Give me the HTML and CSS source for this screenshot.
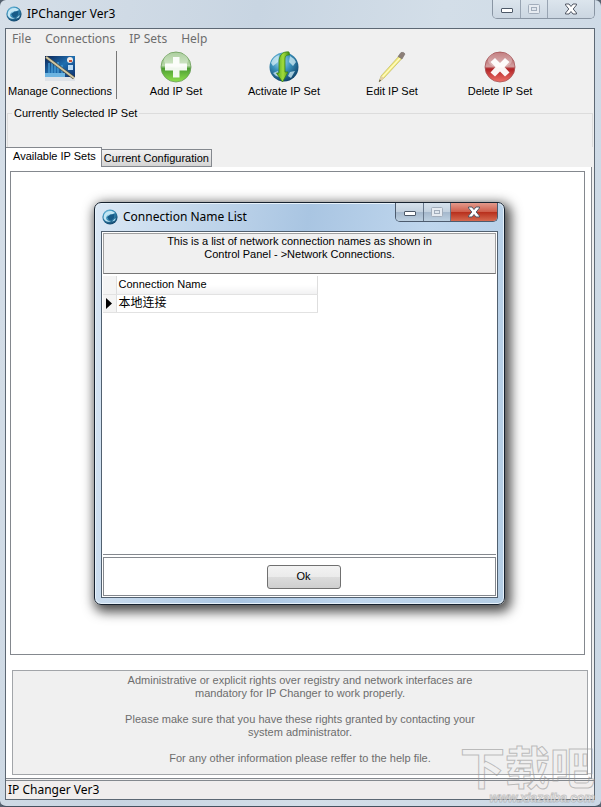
FILE: index.html
```html
<!DOCTYPE html>
<html lang="en">
<head>
<meta charset="utf-8">
<title>IPChanger Ver3</title>
<link rel="stylesheet" href="styles.css">
</head>
<body>
<svg class="defs" aria-hidden="true">
  <defs>
    <radialGradient id="globe" cx=".4" cy=".3" r=".75">
      <stop offset="0" stop-color="#a9dcf2"/><stop offset=".45" stop-color="#3b93bd"/><stop offset="1" stop-color="#0b3c63"/>
    </radialGradient>
    <linearGradient id="green" x1="0" y1="0" x2="0" y2="1">
      <stop offset="0" stop-color="#7fb46a"/><stop offset=".45" stop-color="#b9d9ab"/><stop offset=".55" stop-color="#4d9e33"/><stop offset="1" stop-color="#8fe04e"/>
    </linearGradient>
    <linearGradient id="red" x1="0" y1="0" x2="0" y2="1">
      <stop offset="0" stop-color="#a8474a"/><stop offset=".48" stop-color="#d3a0a1"/><stop offset=".56" stop-color="#b02326"/><stop offset="1" stop-color="#f07068"/>
    </linearGradient>
    <linearGradient id="arrow" x1="0" y1="0" x2="1" y2="0">
      <stop offset="0" stop-color="#4fa51c"/><stop offset=".5" stop-color="#a2dc3c"/><stop offset="1" stop-color="#3d8c14"/>
    </linearGradient>
    <linearGradient id="screen" x1="0" y1="0" x2="1" y2="1">
      <stop offset="0" stop-color="#0b2355"/><stop offset=".5" stop-color="#1f6fb0"/><stop offset="1" stop-color="#0d2f6c"/>
    </linearGradient>
    <symbol id="app" viewBox="0 0 16 16">
      <circle cx="8" cy="8" r="7.600" fill="url(#globe)"/>
      <path d="M2 6C4 1.500 10 .8 13 4L9.500 5.500C7 4.500 5 5.500 4 8.500C4 11 6 12.500 9 12C6 14 2.500 12 1.500 9Z" fill="#c3e6f4"/>
      <path d="M5 8l3.500-2.500L12.500 5l-.5 4-2.500 2.500L7 11z" fill="#175b88"/>
      <path d="M10 12.500l3.500-3.500q.5 3-3.500 3.500z" fill="#a9dcf2"/>
    </symbol>
    <symbol id="min" viewBox="0 0 14 12"><rect x="1.500" y="5.500" width="11" height="4" rx=".5" fill="#fff" stroke="#4d5968"/></symbol>
    <symbol id="max" viewBox="0 0 14 12"><rect x="1.500" y="1.500" width="11" height="9" rx="1" fill="#e6ebf1" stroke="#a2adbb"/><rect x="4.500" y="4.500" width="5" height="3" fill="#dfe6ee" stroke="#a2adbb"/></symbol>
    <symbol id="close" viewBox="0 0 14 12"><path d="M1.500 1h3.500l2 2.500L9 1h3.500v1L9.200 6l3.300 4v1H9L7 8.500 5 11H1.500v-1L4.800 6 1.500 2z" fill="#fff" stroke="#525865"/></symbol>
  </defs>
</svg>

<main class="window">
  <header class="titlebar">
    <svg class="app-icon"><use href="#app"/></svg>
    <h1 class="title">IPChanger Ver3</h1>
    <div class="controls">
      <button class="control" aria-label="Minimize"><svg class="glyph"><use href="#min"/></svg></button>
      <button class="control" aria-label="Maximize" disabled><svg class="glyph"><use href="#max"/></svg></button>
      <button class="control control-wide" aria-label="Close"><svg class="glyph"><use href="#close"/></svg></button>
    </div>
  </header>

  <div class="client">
    <nav class="menu">
      <button class="menu-item">File</button>
      <button class="menu-item">Connections</button>
      <button class="menu-item">IP Sets</button>
      <button class="menu-item">Help</button>
    </nav>

    <div class="toolbar">
      <button class="tool">
        <svg class="tool-icon" viewBox="0 0 32 32">
          <rect x="1" y="5" width="30" height="25" fill="#dfe3e8"/>
          <rect x="1" y="5" width="30" height="21" fill="url(#screen)"/>
          <path d="M5 12v12M8 10v14M11 14v10M14 11v13M18 14v10" stroke="#4396cf" stroke-width="1.500"/>
          <path d="M1 22h20v4H1z" fill="#6db4e0"/>
          <circle cx="26" cy="9" r="3" fill="#f2e9e4"/><path d="M25 9h3v2h-3z" fill="#c8553c"/>
          <rect x="24" y="14" width="5" height="5" fill="#bcdcf5"/>
          <path d="M2 6l28 21" stroke="#4c4a3c" stroke-width="3"/>
          <path d="M2 6l28 21" stroke="#cfc7a6" stroke-width="2"/>
        </svg>
        <span>Manage Connections</span>
      </button>
      <span class="separator"></span>
      <button class="tool">
        <svg class="tool-icon" viewBox="0 0 32 32">
          <circle cx="16" cy="16" r="15" fill="url(#green)" stroke="#6a9c58" stroke-width=".8"/>
          <ellipse cx="16" cy="9" rx="12" ry="7.500" fill="#fff" opacity=".35"/>
          <path d="M13 6h6.500v6.500H27v7h-7.500v7H13v-7H5v-7h8z" fill="#fff" opacity=".92"/>
        </svg>
        <span>Add IP Set</span>
      </button>
      <button class="tool">
        <svg class="tool-icon" viewBox="0 0 32 32">
          <circle cx="16" cy="16" r="14.500" fill="url(#globe)"/>
          <path d="M3 12q2-6 8-8l-1 7-5 4zM22 5q4 2 6 6l-3 4-4-4zM22 21l5-1-4 7-3-2zM5 22l5-2 1 6-3-1z" fill="#d3edf5" opacity=".75"/>
          <path d="M21 1C14 0 11 5 11 11v11H8.500l6 9L20 21h-3V9c0-4 1-5 4.500-5z" fill="url(#arrow)" stroke="#3c8418" stroke-width=".8"/>
        </svg>
        <span>Activate IP Set</span>
      </button>
      <button class="tool">
        <svg class="tool-icon" viewBox="0 0 32 32">
          <path d="M23 5l3 2.500L8 27l-5 4 2-6z" fill="#f2eb79" stroke="#b5ac5c" stroke-width=".6"/>
          <path d="M24.500 6.500L6.500 26" stroke="#fffbc4" stroke-width="1.200"/>
          <path d="M5 25l3 2-5 4z" fill="#e2cfa6"/><path d="M3.800 28.500l1.200 1L3 31z" fill="#333"/>
          <path d="M22 5.500l3-4q3-1 4 1.500L26 8z" fill="#8c7f78" stroke="#6e6662" stroke-width=".5"/>
        </svg>
        <span>Edit IP Set</span>
      </button>
      <button class="tool">
        <svg class="tool-icon" viewBox="0 0 32 32">
          <circle cx="16" cy="16" r="15" fill="url(#red)" stroke="#a55355" stroke-width=".8"/>
          <ellipse cx="16" cy="9" rx="12" ry="7.500" fill="#fff" opacity=".3"/>
          <path d="M11 7l5 5 5-5 4.500 4-5 5 5 5.500-4.500 4-5-5-5 5-4.500-4 5-5.500-5-5z" fill="#fff" opacity=".95"/>
        </svg>
        <span>Delete IP Set</span>
      </button>
    </div>

    <fieldset class="selected-set"><legend>Currently Selected IP Set</legend></fieldset>

    <div class="tabs" role="tablist">
      <button class="tab tab-active" role="tab" aria-selected="true">Available IP Sets</button>
      <button class="tab" role="tab" aria-selected="false">Current Configuration</button>
    </div>

    <section class="page">
      <div class="sets"></div>
      <div class="notice">
        <p>Administrative or explicit rights over registry and network interfaces are<br>mandatory for IP Changer to work properly.</p>
        <p>Please make sure that you have these rights granted by contacting your<br>system administrator.</p>
        <p>For any other information please reffer to the help file.</p>
      </div>
    </section>

    <footer class="status">IP Changer Ver3</footer>
  </div>
</main>

<section class="dialog" role="dialog" aria-labelledby="dialog-title">
  <header class="titlebar">
    <svg class="app-icon"><use href="#app"/></svg>
    <h2 class="title" id="dialog-title">Connection Name List</h2>
    <div class="controls">
      <button class="control" aria-label="Minimize"><svg class="glyph"><use href="#min"/></svg></button>
      <button class="control" aria-label="Maximize" disabled><svg class="glyph"><use href="#max"/></svg></button>
      <button class="control control-wide control-red" aria-label="Close"><svg class="glyph"><use href="#close"/></svg></button>
    </div>
  </header>
  <div class="dialog-client">
    <p class="info">This is a list of network connection names as shown in<br>Control Panel - &gt;Network Connections.</p>
    <div class="list">
      <table class="grid">
        <thead><tr><th class="marker"></th><th>Connection Name</th></tr></thead>
        <tbody><tr><td class="marker"><svg class="pointer" viewBox="0 0 6 11"><path d="M0 0l6 5.500L0 11z"/></svg></td><td lang="zh">本地连接</td></tr></tbody>
      </table>
    </div>
    <div class="actions"><button class="ok">Ok</button></div>
  </div>
</section>

<div class="watermark">
  <span class="watermark-name" lang="zh">下载吧</span>
  <span class="watermark-url">www.xiazaiba.com</span>
</div>
</body>
</html>
```
FILE: styles.css
```css
* {
  box-sizing: border-box;
}

body {
  margin: 0;
  position: relative;
  background: #56616e;
  color: #000;
  font: 11px/13px "Liberation Sans", "Noto Sans CJK SC", sans-serif;
}

button {
  margin: 0;
  padding: 0;
  border: 0;
  background: none;
  color: inherit;
  font: inherit;
}

p {
  margin: 0;
}

.defs {
  position: absolute;
  width: 0;
  height: 0;
}

/* Main window */

.window {
  display: flex;
  flex-direction: column;
  min-height: 100vh;
  padding: 0 6px 6px 5px;
  border-bottom: 1px solid #465260;
  border-radius: 6px;
  background: linear-gradient(100deg, #d6dfe8 0, #c8d5e2 35%, #d3dee8 60%, #cbd8e5 100%);
}

.titlebar {
  display: flex;
  align-items: center;
  height: 28px;
  padding-left: 1px;
}

.app-icon {
  width: 16px;
  height: 16px;
}

.title {
  flex: 1;
  margin: 0 0 0 5px;
  font: 12px/16px "Noto Sans", sans-serif;
}

.controls {
  display: flex;
  align-self: flex-start;
  height: 19px;
  border: 1px solid #8995a3;
  border-top: 0;
  border-radius: 0 0 5px 5px;
  overflow: hidden;
}

.control {
  display: flex;
  align-items: center;
  justify-content: center;
  width: 27px;
  background: linear-gradient(#dce5ed, #cbd6e1);
}

.control + .control {
  border-left: 1px solid #98a4b2;
}

.control-wide {
  width: 47px;
}

.glyph {
  width: 14px;
  height: 12px;
}

.client {
  display: flex;
  flex: 1;
  flex-direction: column;
  border: 1px solid #5d6874;
  background: #f0f0f0;
}

.menu {
  display: flex;
  gap: 14px;
  padding: 0 6px;
  color: #6d6d6d;
  font: 12px/20px "Noto Sans", sans-serif;
}

.toolbar {
  display: flex;
  height: 54px;
  padding-top: 2px;
}

.tool {
  display: flex;
  flex-direction: column;
  align-items: center;
  gap: 2px;
  width: 108px;
  white-space: nowrap;
}

.tool-icon {
  width: 32px;
  height: 32px;
}

.separator {
  width: 1px;
  height: 48px;
  margin: 0 5px 0 2px;
  background: #777;
}

.selected-set {
  min-width: 0;
  height: 40px;
  margin: 4px 1px 0;
  padding: 0 4px;
  border: 1px solid #dcdcdc;
  border-bottom: 0;
}

.selected-set legend {
  padding: 0 2px;
}

.tabs {
  display: flex;
  align-items: flex-end;
  height: 20px;
}

.tab {
  height: 18px;
  padding: 0 2px;
  border: 1px solid #84888e;
  border-left: 0;
  background: linear-gradient(#f2f2f2, #d4d4d4);
}

.tab-active {
  height: 20px;
  padding: 0 5px 2px 7px;
  border-bottom: 0;
  background: #fff;
}

.page {
  display: flex;
  flex: 1;
  flex-direction: column;
  gap: 15px;
  margin: 0 2px 1px 0;
  padding: 4px 3px 3px 4px;
  border: 1px solid #84888e;
  border-top: 0;
  border-left: 0;
  background: #fff;
}

.sets {
  flex: 1;
  margin-right: 3px;
  border: 1px solid #84888e;
}

.notice {
  display: flex;
  flex-direction: column;
  gap: 13px;
  min-height: 105px;
  margin-left: 2px;
  padding: 3px 0;
  border: 1px solid #a2a5a9;
  background: #f0f0f0;
  color: #6d6d6d;
  text-align: center;
}

.status {
  padding-left: 2px;
  border-top: 1px solid #84888e;
  background: #f0eded;
  font: 12px/18px "Noto Sans", sans-serif;
}

/* Connection list dialog */

.dialog {
  position: absolute;
  top: 202px;
  right: 96px;
  bottom: 202px;
  left: 94px;
  display: flex;
  flex-direction: column;
  padding: 0 6px 6px;
  border: 1px solid #17222f;
  border-radius: 7px;
  background: linear-gradient(100deg, #dbe8f5 0, #c4d8ec 20%, #a9c5e2 45%, #bfd6ed 70%, #b4cde4 100%);
  box-shadow: inset 0 0 0 1px #e6f1fa, 3px 4px 12px 3px rgb(0 0 0 / 70%);
}

.dialog .controls {
  border-color: #4c5b6e;
}

.dialog .control {
  background: linear-gradient(#d6e1ec 0, #c3d1df 48%, #a5b8cc 52%, #bdd0e1 100%);
}

.dialog .control + .control {
  border-color: #66768a;
}

.dialog .control-red {
  background: linear-gradient(#e29a8c 0, #cf5f4c 48%, #b8301d 52%, #d5694f 100%);
}

.dialog-client {
  display: flex;
  flex: 1;
  flex-direction: column;
  gap: 2px;
  padding: 1px;
  border: 1px solid #51606f;
  background: #fff;
}

.info {
  min-height: 41px;
  padding-top: 1px;
  border: 1px solid #a0a0a0;
  border-bottom-color: #777;
  background: #f0f0f0;
  text-align: center;
}

.list {
  flex: 1;
  border-bottom: 1px solid #84888e;
}

.grid {
  border-collapse: collapse;
}

.grid th,
.grid td {
  width: 201px;
  height: 18px;
  padding: 0 2px;
  border-right: 1px solid #dedede;
  border-bottom: 1px solid #e2e2e2;
  text-align: left;
  font-weight: 400;
}

.grid td {
  font-size: 12px;
}

.grid th {
  background: linear-gradient(#fff 50%, #f1f1f2);
}

.grid .marker {
  width: 13px;
  padding: 0 3px;
  background: #f4f4f4;
}

.pointer {
  display: block;
  width: 6px;
  height: 11px;
}

.actions {
  display: flex;
  align-items: center;
  justify-content: center;
  height: 39px;
  padding-left: 8px;
  border: 1px solid #84888e;
}

.ok {
  width: 74px;
  height: 24px;
  border: 1px solid #707070;
  border-radius: 3px;
  background: linear-gradient(#f3f3f3 0, #ebebeb 49%, #dcdcdc 51%, #cfcfcf 100%);
}

/* Site mark over the lower right corner */

.watermark {
  position: absolute;
  right: 6px;
  bottom: 3px;
  display: flex;
  flex-direction: column;
  align-items: flex-end;
  color: transparent;
  pointer-events: none;
}

.watermark-name {
  font: 700 45px/52px "Noto Sans CJK SC", sans-serif;
  -webkit-text-stroke: 1px rgb(150 150 150 / 60%);
}

.watermark-url {
  color: rgb(255 255 255 / 70%);
  font: italic 700 12px/12px "Liberation Sans", sans-serif;
  -webkit-text-stroke: 1px rgb(150 150 150 / 50%);
}
```
